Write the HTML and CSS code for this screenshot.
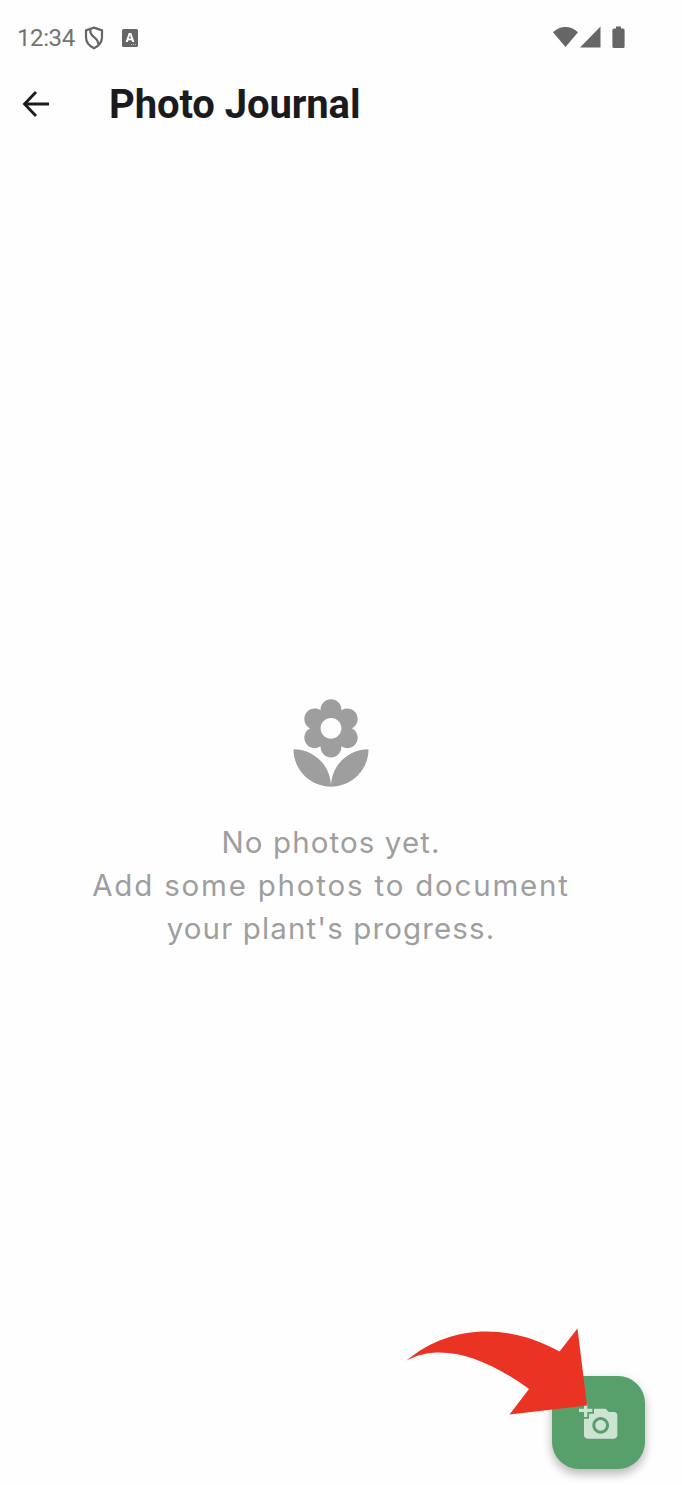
FILE: index.html
```html
<!DOCTYPE html>
<html lang="en">
<head>
<meta charset="utf-8">
<title>Photo Journal</title>
<link rel="stylesheet" href="styles.css">
</head>
<body>
<div class="screen">
  <div class="status-bar">
    <span class="time">12:34</span>
    <svg class="shield" viewBox="0 0 20 24" aria-hidden="true">
      <path d="M10 1.600 18 4.400V11c0 5.200-3.200 9-8 11.200C5.200 20 2 16.200 2 11V4.400Z"/>
      <path d="M6.500 3.500C5.800 7 6.800 8.800 10 11.200S14.600 15.500 14.200 18.500"/>
    </svg>
    <svg class="keyboard" viewBox="0 0 16 18" aria-hidden="true">
      <rect width="16" height="18" rx="1.500" fill="#666"/>
      <path d="M3.600 13 6.700 4H9.300L12.400 13H10.200L9.600 11.200H6.400L5.800 13ZM6.900 9.500H9.100L8 6Z" fill="#fff"/>
      <path d="M9 15.500h1m1 0h1m1 0h1" stroke="#bbb"/>
    </svg>
    <svg class="signals" viewBox="0 0 74 24" aria-hidden="true">
      <path d="M0 6.300C7-.7 18-.7 25 6.300L12.500 21Z"/>
      <path d="M27 21.500 47.500 .5v21Z"/>
      <path d="M63 .5h5v2h2a1.600 1.600 0 0 1 1.600 1.600v16.300a1.600 1.600 0 0 1-1.600 1.600h-9a1.600 1.600 0 0 1-1.600-1.600V4.100A1.600 1.600 0 0 1 61 2.500h2Z"/>
    </svg>
  </div>
  <header class="app-bar">
    <svg class="back" viewBox="0 0 28 28" role="img" aria-label="Back">
      <path d="M14 2 2.500 14l11.500 12M2.500 14H27"/>
    </svg>
    <h1 class="title">Photo Journal</h1>
  </header>
  <main class="empty">
    <svg class="flower" viewBox="0 0 24 24" aria-hidden="true">
      <path d="M12 22c4.970 0 9-4.030 9-9-4.970 0-9 4.030-9 9zM5.600 10.250c0 1.380 1.120 2.500 2.500 2.500.53 0 1.010-.16 1.420-.44l-.02.19c0 1.380 1.120 2.500 2.500 2.500s2.500-1.120 2.500-2.500l-.02-.19c.4.28.89.44 1.420.44 1.380 0 2.500-1.120 2.500-2.500 0-1-.59-1.850-1.430-2.250.84-.4 1.430-1.250 1.430-2.250 0-1.380-1.120-2.500-2.500-2.500-.53 0-1.010.16-1.420.44l.02-.19C14.500 2.120 13.380 1 12 1S9.500 2.120 9.500 3.500l.02.19c-.4-.28-.89-.44-1.420-.44-1.380 0-2.500 1.120-2.500 2.500 0 1 .59 1.850 1.430 2.250-.84.4-1.430 1.250-1.430 2.250zM12 5.500c1.380 0 2.500 1.120 2.500 2.500s-1.120 2.500-2.500 2.500S9.500 9.380 9.500 8s1.120-2.500 2.500-2.500zM3 13c0 4.970 4.030 9 9 9 0-4.970-4.030-9-9-9z"/>
    </svg>
    <p class="message">
      <span class="line line-first">No photos yet.</span>
      <span class="line line-second">Add some photos to document</span>
      <span class="line line-third">your plant's progress.</span>
    </p>
  </main>
  <button class="fab" aria-label="Add photo">
    <svg class="camera" viewBox="0 0 24 24" aria-hidden="true">
      <path d="M3 4V1h2v3h3v2H5v3H3V6H0V4h3zm3 6V7h3V4h7l1.830 2H21c1.100 0 2 .9 2 2v12c0 1.100-.9 2-2 2H5c-1.100 0-2-.9-2-2V10h3zm7 9c2.760 0 5-2.240 5-5s-2.240-5-5-5-5 2.240-5 5 2.240 5 5 5zm-3.200-5c0 1.770 1.430 3.200 3.200 3.200s3.200-1.430 3.200-3.200-1.430-3.200-3.200-3.200-3.200 1.430-3.200 3.200z"/>
    </svg>
  </button>
  <svg class="pointer" viewBox="400 1320 200 100" aria-hidden="true">
    <path d="M406.500 1360.500C450 1324 509 1323 559.500 1351.500L577.500 1328.500 587 1405.500 509.500 1414.500 529 1389C485 1357 441 1342 406.500 1360.500Z"/>
  </svg>
</div>
</body>
</html>
```
FILE: styles.css
```css
* { box-sizing: border-box; }
body { margin: 0; background: #fefefe; }
.screen {
  position: relative;
  display: flex;
  flex-direction: column;
  width: 682px;
  height: 1485px;
  overflow: hidden;
  font-family: Roboto, sans-serif;
}
.status-bar {
  display: flex;
  align-items: center;
  height: 75px;
  padding: 0 55px 0 17px;
}
.time { width: 67px; font-size: 24px; line-height: 28px; color: #737373; letter-spacing: -0.4px; }
.shield { width: 20px; height: 24px; fill: none; stroke: #666; stroke-width: 2.2; }
.keyboard { width: 16px; height: 18px; margin-left: 18px; }
.signals { width: 74px; height: 24px; margin-left: auto; fill: #666; }
.app-bar { display: flex; align-items: center; height: 58px; padding-left: 22px; }
.back { width: 28px; height: 28px; fill: none; stroke: #1b1b1f; stroke-width: 2.8; }
.title { margin: 0; padding: 2px 0 0 59px; font-size: 40px; line-height: 48px; letter-spacing: -0.1px; font-weight: 700; color: #1b1b1f; }
.empty {
  display: flex;
  flex-direction: column;
  align-items: center;
  width: 661px;
  padding-top: 562px;
}
.flower { width: 100px; height: 100px; fill: #9e9e9e; }
.message {
  display: flex;
  flex-direction: column;
  align-items: center;
  margin: 26px 0 0;
  font-family: Inter, "Open Sans", sans-serif;
  font-size: 29.5px;
  line-height: 43px;
  color: #9e9e9e;
}
.line { padding-left: 1px; white-space: nowrap; }
.line-first { letter-spacing: 1.1px; }
.line-second { letter-spacing: 1.8px; }
.line-third { letter-spacing: 1.120px; }
.fab {
  position: absolute;
  right: 37px;
  bottom: 16.500px;
  display: flex;
  align-items: center;
  justify-content: center;
  width: 93px;
  height: 93px;
  padding: 0;
  border: 0;
  border-radius: 27px;
  background: #579f6b;
  box-shadow: 0 6px 10px rgba(0, 0, 0, 0.2), 0 2px 12px rgba(0, 0, 0, 0.1);
}
.camera { width: 40px; height: 40px; fill: #cde4d3; }
.pointer { position: absolute; left: 400px; top: 1320px; width: 200px; height: 100px; fill: #ea3323; }
```
